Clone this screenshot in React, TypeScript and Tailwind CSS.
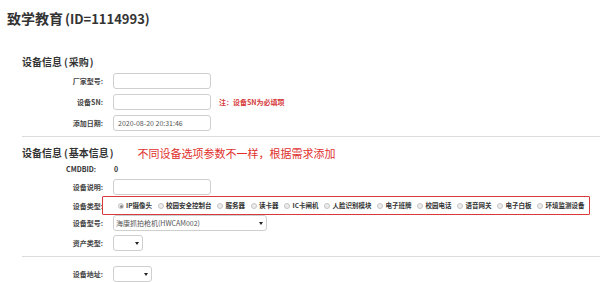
import React from "react";

const font = "font-['Noto_Sans_CJK_SC','Noto_Sans',sans-serif]";

function Label({ children }: { children: React.ReactNode }) {
  return (
    <div className="w-[103px] shrink-0 text-right text-[7px] leading-[10px] font-bold text-[#444] whitespace-nowrap">
      {children}
    </div>
  );
}

function Input({ value, w = "w-[98px]" }: { value?: string; w?: string }) {
  return (
    <div
      className={`${w} h-[16px] ml-[10px] border border-[#cfcfcf] rounded-[3px] bg-white flex items-center pl-[4px] text-[7px] text-[#555]`}
    >
      {value}
    </div>
  );
}

function Select({ value, w }: { value?: string; w: string }) {
  return (
    <div
      className={`${w} h-[16px] ml-[10px] border border-[#cfcfcf] rounded-[3px] bg-white flex items-center justify-between pl-[2px] pr-[3px] text-[7px] text-[#555]`}
    >
      <span>{value}</span>
      <svg width="4" height="3" viewBox="0 0 4 3">
        <path d="M0 0 L4 0 L2 3 Z" fill="#222" />
      </svg>
    </div>
  );
}

function Radio({ checked }: { checked?: boolean }) {
  return (
    <span className="w-[6px] h-[6px] rounded-full border border-[#c4c4c4] bg-[#ececec] flex items-center justify-center shrink-0">
      {checked && <span className="w-[3px] h-[3px] rounded-full bg-[#888]" />}
    </span>
  );
}

function Heading({ main, sub }: { main: string; sub: string }) {
  return (
    <span className="text-[10px] font-bold text-[#333]">
      {main}
      <span className="ml-[2px] mr-[1px]">(</span>
      {sub}
      <span className="ml-[1px]">)</span>
    </span>
  );
}

const types = [
  "IP摄像头",
  "校园安全控制台",
  "服务器",
  "读卡器",
  "IC卡闸机",
  "人脸识别模块",
  "电子班牌",
  "校园电话",
  "语音网关",
  "电子白板",
  "环境监测设备",
];

export default function App() {
  return (
    <div className={`w-[600px] h-[282px] bg-white overflow-hidden ${font} text-[#333]`}>
      <div className="pl-[7px] pt-[8px] text-[14px] leading-[20px] font-bold text-[#333] whitespace-nowrap">
        致学教育
        <span className="text-[13px]">
          <span className="ml-[2px]">(</span>ID=1114993)
        </span>
      </div>

      <div className="pl-[22px] mt-[24px] leading-[12px] whitespace-nowrap">
        <Heading main="设备信息" sub="采购" />
      </div>

      <div className="flex items-center mt-[5px]">
        <Label>厂家型号:</Label>
        <Input />
      </div>
      <div className="flex items-center mt-[5px]">
        <Label>设备SN:</Label>
        <Input />
        <span className="ml-[8px] text-[7px] font-bold text-[#d63b3b] whitespace-nowrap">注：设备SN为必填项</span>
      </div>
      <div className="flex items-center mt-[5px]">
        <Label>添加日期:</Label>
        <Input value="2020-08-20 20:31:46" />
      </div>

      <div className="ml-[22px] mt-[5px] border-t border-[#dcdcdc]" />

      <div className="flex items-center pl-[22px] mt-[10px] leading-[12px] whitespace-nowrap">
        <Heading main="设备信息" sub="基本信息" />
        <span className="ml-[24px] text-[11px] text-[#e0302c]">不同设备选项参数不一样，根据需求添加</span>
      </div>

      <div className="flex items-center mt-[4px] h-[12px]">
        <div className="w-[96px] shrink-0 text-right text-[7px] font-bold text-[#333]">CMDBID:</div>
        <span className="ml-[18px] text-[7px] font-bold">0</span>
      </div>
      <div className="flex items-center mt-[4px]">
        <Label>设备说明:</Label>
        <Input />
      </div>
      <div className="relative flex items-center mt-[3px] h-[16px]">
        <Label>设备类型:</Label>
        <div className="flex items-center ml-[15px] text-[6.5px] font-bold text-[#333] whitespace-nowrap">
          {types.map((t, i) => (
            <span key={t} className="flex items-center">
              {i > 0 && <span className="w-[6px]" />}
              <Radio checked={i === 0} />
              <span className="ml-[2px]">{t}</span>
            </span>
          ))}
        </div>
        <div className="absolute left-[102px] top-[-2px] w-[488px] h-[19px] border-[1.5px] border-[#d9393b] rounded-[1px] pointer-events-none" />
      </div>
      <div className="flex items-center mt-[1px]">
        <Label>设备型号:</Label>
        <Select w="w-[154px]" value="海康抓拍枪机(HWCAM002)" />
      </div>
      <div className="flex items-center mt-[4px]">
        <Label>资产类型:</Label>
        <Select w="w-[30px]" />
      </div>

      <div className="ml-[22px] mt-[5px] border-t border-[#dcdcdc]" />

      <div className="flex items-center mt-[9px]">
        <Label>设备地址:</Label>
        <Select w="w-[39px]" />
      </div>
    </div>
  );
}
